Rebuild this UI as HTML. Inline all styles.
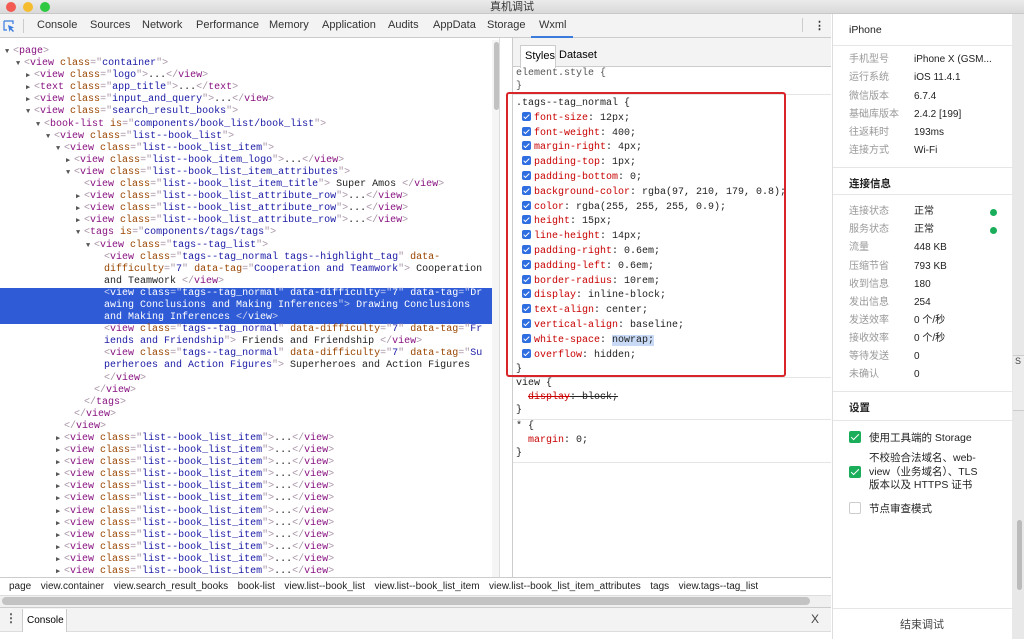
<!DOCTYPE html>
<html><head><meta charset="utf-8"><style>
*{margin:0;padding:0;box-sizing:border-box}
body{width:1024px;height:639px;overflow:hidden;background:#fff;font-family:"Liberation Sans","Noto Sans CJK SC",sans-serif;position:relative}
.abs{position:absolute}
.mono{font-family:"Liberation Mono","DejaVu Sans Mono",monospace;font-size:10px}
#title{left:0;top:0;width:1024px;height:14px;background:linear-gradient(#ebebeb,#d9d9d9);border-bottom:1px solid #c8c8c8;font-size:11px;text-align:center;line-height:14px;color:#333}
.dot{top:2px;width:10px;height:10px;border-radius:50%}
#tb{left:0;top:14px;width:831px;height:24px;background:#f3f3f3;border-bottom:1px solid #ccc}
#tb span{position:absolute;top:5px;font-size:11px;color:#333}
#dom{left:0;top:46px;width:492px}
#dom div{height:12.1px;line-height:12.1px;white-space:pre;color:#222}
.t{color:#881280}.a{color:#994500}.v{color:#1a1aa6}.p{color:#a894a6}
.tri{display:inline-block;width:8px;font-size:7px;color:#555}
.hl{background:#2f5bd6}
.hl,.hl span{color:#fff!important}
.hl .p{color:#c7d0f0!important}
#sty div{height:14.8px;line-height:14.8px;white-space:pre;color:#222}
.pr{color:#c80000}
.cb{display:inline-block;width:9px;height:9px;background:#2f6ee0;border-radius:2px;vertical-align:-1px;margin-right:3px;position:relative}
.cb:after{content:"";position:absolute;left:3px;top:1px;width:2px;height:5px;border:solid #fff;border-width:0 1.5px 1.5px 0;transform:rotate(45deg)}
#rp{left:832px;top:14px;width:180px;height:625px;background:#fff;border-left:1px solid #ddd}
.row{position:absolute;left:16px;font-size:10px;line-height:12px;color:#999}
.val{position:absolute;left:81px;font-size:10px;line-height:12px;color:#222;margin-top:0}
.sec{position:absolute;left:0;width:180px;border-top:1px solid #e6e6e6}
.gd{position:absolute;left:157px;width:7px;height:7px;border-radius:50%;background:#1aad5a}
.ck{position:absolute;left:16px;width:12px;height:12px;border-radius:2px;background:#1aad5a}
.ck:after{content:"";position:absolute;left:4px;top:1px;width:3px;height:7px;border:solid #fff;border-width:0 1.5px 1.5px 0;transform:rotate(45deg)}
#bc span{margin-right:9.5px}
</style></head><body>
<div id="title" class="abs">真机调试</div>
<div class="abs dot" style="left:6px;background:#f25a52"></div>
<div class="abs dot" style="left:23px;background:#f6bc2f"></div>
<div class="abs dot" style="left:40px;background:#2ec940"></div>
<div id="tb" class="abs">
<svg class="abs" style="left:3px;top:6px" width="13" height="13" viewBox="0 0 13 13"><path d="M1 1h9v3M1 1v9h3" fill="none" stroke="#3a7be0" stroke-width="1.2"/><path d="M5 5l6 2.5-2.5 1 2.5 2.5-1 1-2.5-2.5-1 2.5z" fill="#3a7be0"/></svg>
<div class="abs" style="left:23px;top:5px;width:1px;height:14px;background:#ccc"></div>
<span style="left:37px">Console</span><span style="left:90px">Sources</span><span style="left:142px">Network</span><span style="left:196px">Performance</span><span style="left:269px">Memory</span><span style="left:322px">Application</span><span style="left:388px">Audits</span><span style="left:433px">AppData</span><span style="left:487px">Storage</span><span style="left:539px">Wxml</span>
<div class="abs" style="left:531px;top:22px;width:42px;height:2px;background:#3b7bdc"></div>
<div class="abs" style="left:802px;top:4px;width:1px;height:14px;background:#ccc"></div>
<span style="left:814px;font-weight:bold">⋮</span>
</div>
<div id="dom" class="abs mono">
<div style="padding-left:5px"><span class="tri">▼</span><span class="p">&lt;</span><span class="t">page</span><span class="p">&gt;</span></div>
<div style="padding-left:16px"><span class="tri">▼</span><span class="p">&lt;</span><span class="t">view</span> <span class="a">class</span><span class="p">="</span><span class="v">container</span><span class="p">"&gt;</span></div>
<div style="padding-left:26px"><span class="tri">▶</span><span class="p">&lt;</span><span class="t">view</span> <span class="a">class</span><span class="p">="</span><span class="v">logo</span><span class="p">"&gt;</span>...<span class="p">&lt;/</span><span class="t">view</span><span class="p">&gt;</span></div>
<div style="padding-left:26px"><span class="tri">▶</span><span class="p">&lt;</span><span class="t">text</span> <span class="a">class</span><span class="p">="</span><span class="v">app_title</span><span class="p">"&gt;</span>...<span class="p">&lt;/</span><span class="t">text</span><span class="p">&gt;</span></div>
<div style="padding-left:26px"><span class="tri">▶</span><span class="p">&lt;</span><span class="t">view</span> <span class="a">class</span><span class="p">="</span><span class="v">input_and_query</span><span class="p">"&gt;</span>...<span class="p">&lt;/</span><span class="t">view</span><span class="p">&gt;</span></div>
<div style="padding-left:26px"><span class="tri">▼</span><span class="p">&lt;</span><span class="t">view</span> <span class="a">class</span><span class="p">="</span><span class="v">search_result_books</span><span class="p">"&gt;</span></div>
<div style="padding-left:36px"><span class="tri">▼</span><span class="p">&lt;</span><span class="t">book-list</span> <span class="a">is</span><span class="p">="</span><span class="v">components/book_list/book_list</span><span class="p">"&gt;</span></div>
<div style="padding-left:46px"><span class="tri">▼</span><span class="p">&lt;</span><span class="t">view</span> <span class="a">class</span><span class="p">="</span><span class="v">list--book_list</span><span class="p">"&gt;</span></div>
<div style="padding-left:56px"><span class="tri">▼</span><span class="p">&lt;</span><span class="t">view</span> <span class="a">class</span><span class="p">="</span><span class="v">list--book_list_item</span><span class="p">"&gt;</span></div>
<div style="padding-left:66px"><span class="tri">▶</span><span class="p">&lt;</span><span class="t">view</span> <span class="a">class</span><span class="p">="</span><span class="v">list--book_item_logo</span><span class="p">"&gt;</span>...<span class="p">&lt;/</span><span class="t">view</span><span class="p">&gt;</span></div>
<div style="padding-left:66px"><span class="tri">▼</span><span class="p">&lt;</span><span class="t">view</span> <span class="a">class</span><span class="p">="</span><span class="v">list--book_list_item_attributes</span><span class="p">"&gt;</span></div>
<div style="padding-left:84px"><span class="p">&lt;</span><span class="t">view</span> <span class="a">class</span><span class="p">="</span><span class="v">list--book_list_item_title</span><span class="p">"&gt;</span> Super Amos <span class="p">&lt;/</span><span class="t">view</span><span class="p">&gt;</span></div>
<div style="padding-left:76px"><span class="tri">▶</span><span class="p">&lt;</span><span class="t">view</span> <span class="a">class</span><span class="p">="</span><span class="v">list--book_list_attribute_row</span><span class="p">"&gt;</span>...<span class="p">&lt;/</span><span class="t">view</span><span class="p">&gt;</span></div>
<div style="padding-left:76px"><span class="tri">▶</span><span class="p">&lt;</span><span class="t">view</span> <span class="a">class</span><span class="p">="</span><span class="v">list--book_list_attribute_row</span><span class="p">"&gt;</span>...<span class="p">&lt;/</span><span class="t">view</span><span class="p">&gt;</span></div>
<div style="padding-left:76px"><span class="tri">▶</span><span class="p">&lt;</span><span class="t">view</span> <span class="a">class</span><span class="p">="</span><span class="v">list--book_list_attribute_row</span><span class="p">"&gt;</span>...<span class="p">&lt;/</span><span class="t">view</span><span class="p">&gt;</span></div>
<div style="padding-left:76px"><span class="tri">▼</span><span class="p">&lt;</span><span class="t">tags</span> <span class="a">is</span><span class="p">="</span><span class="v">components/tags/tags</span><span class="p">"&gt;</span></div>
<div style="padding-left:86px"><span class="tri">▼</span><span class="p">&lt;</span><span class="t">view</span> <span class="a">class</span><span class="p">="</span><span class="v">tags--tag_list</span><span class="p">"&gt;</span></div>
<div style="padding-left:104px"><span class="p">&lt;</span><span class="t">view</span> <span class="a">class</span><span class="p">="</span><span class="v">tags--tag_normal tags--highlight_tag</span><span class="p">"</span> <span class="a">data-</span></div>
<div style="padding-left:104px"><span class="a">difficulty</span><span class="p">="</span><span class="v">7</span><span class="p">"</span> <span class="a">data-tag</span><span class="p">="</span><span class="v">Cooperation and Teamwork</span><span class="p">"&gt;</span> Cooperation</div>
<div style="padding-left:104px">and Teamwork <span class="p">&lt;/</span><span class="t">view</span><span class="p">&gt;</span></div>
<div class="hl" style="padding-left:104px"><span class="p">&lt;</span><span class="t">view</span> <span class="a">class</span><span class="p">="</span><span class="v">tags--tag_normal</span><span class="p">"</span> <span class="a">data-difficulty</span><span class="p">="</span><span class="v">7</span><span class="p">"</span> <span class="a">data-tag</span><span class="p">="</span><span class="v">Dr</span></div>
<div class="hl" style="padding-left:104px"><span class="v">awing Conclusions and Making Inferences</span><span class="p">"&gt;</span> Drawing Conclusions</div>
<div class="hl" style="padding-left:104px">and Making Inferences <span class="p">&lt;/</span><span class="t">view</span><span class="p">&gt;</span></div>
<div style="padding-left:104px"><span class="p">&lt;</span><span class="t">view</span> <span class="a">class</span><span class="p">="</span><span class="v">tags--tag_normal</span><span class="p">"</span> <span class="a">data-difficulty</span><span class="p">="</span><span class="v">7</span><span class="p">"</span> <span class="a">data-tag</span><span class="p">="</span><span class="v">Fr</span></div>
<div style="padding-left:104px"><span class="v">iends and Friendship</span><span class="p">"&gt;</span> Friends and Friendship <span class="p">&lt;/</span><span class="t">view</span><span class="p">&gt;</span></div>
<div style="padding-left:104px"><span class="p">&lt;</span><span class="t">view</span> <span class="a">class</span><span class="p">="</span><span class="v">tags--tag_normal</span><span class="p">"</span> <span class="a">data-difficulty</span><span class="p">="</span><span class="v">7</span><span class="p">"</span> <span class="a">data-tag</span><span class="p">="</span><span class="v">Su</span></div>
<div style="padding-left:104px"><span class="v">perheroes and Action Figures</span><span class="p">"&gt;</span> Superheroes and Action Figures</div>
<div style="padding-left:104px"><span class="p">&lt;/</span><span class="t">view</span><span class="p">&gt;</span></div>
<div style="padding-left:94px"><span class="p">&lt;/</span><span class="t">view</span><span class="p">&gt;</span></div>
<div style="padding-left:84px"><span class="p">&lt;/</span><span class="t">tags</span><span class="p">&gt;</span></div>
<div style="padding-left:74px"><span class="p">&lt;/</span><span class="t">view</span><span class="p">&gt;</span></div>
<div style="padding-left:64px"><span class="p">&lt;/</span><span class="t">view</span><span class="p">&gt;</span></div>
<div style="padding-left:56px"><span class="tri">▶</span><span class="p">&lt;</span><span class="t">view</span> <span class="a">class</span><span class="p">="</span><span class="v">list--book_list_item</span><span class="p">"&gt;</span>...<span class="p">&lt;/</span><span class="t">view</span><span class="p">&gt;</span></div>
<div style="padding-left:56px"><span class="tri">▶</span><span class="p">&lt;</span><span class="t">view</span> <span class="a">class</span><span class="p">="</span><span class="v">list--book_list_item</span><span class="p">"&gt;</span>...<span class="p">&lt;/</span><span class="t">view</span><span class="p">&gt;</span></div>
<div style="padding-left:56px"><span class="tri">▶</span><span class="p">&lt;</span><span class="t">view</span> <span class="a">class</span><span class="p">="</span><span class="v">list--book_list_item</span><span class="p">"&gt;</span>...<span class="p">&lt;/</span><span class="t">view</span><span class="p">&gt;</span></div>
<div style="padding-left:56px"><span class="tri">▶</span><span class="p">&lt;</span><span class="t">view</span> <span class="a">class</span><span class="p">="</span><span class="v">list--book_list_item</span><span class="p">"&gt;</span>...<span class="p">&lt;/</span><span class="t">view</span><span class="p">&gt;</span></div>
<div style="padding-left:56px"><span class="tri">▶</span><span class="p">&lt;</span><span class="t">view</span> <span class="a">class</span><span class="p">="</span><span class="v">list--book_list_item</span><span class="p">"&gt;</span>...<span class="p">&lt;/</span><span class="t">view</span><span class="p">&gt;</span></div>
<div style="padding-left:56px"><span class="tri">▶</span><span class="p">&lt;</span><span class="t">view</span> <span class="a">class</span><span class="p">="</span><span class="v">list--book_list_item</span><span class="p">"&gt;</span>...<span class="p">&lt;/</span><span class="t">view</span><span class="p">&gt;</span></div>
<div style="padding-left:56px"><span class="tri">▶</span><span class="p">&lt;</span><span class="t">view</span> <span class="a">class</span><span class="p">="</span><span class="v">list--book_list_item</span><span class="p">"&gt;</span>...<span class="p">&lt;/</span><span class="t">view</span><span class="p">&gt;</span></div>
<div style="padding-left:56px"><span class="tri">▶</span><span class="p">&lt;</span><span class="t">view</span> <span class="a">class</span><span class="p">="</span><span class="v">list--book_list_item</span><span class="p">"&gt;</span>...<span class="p">&lt;/</span><span class="t">view</span><span class="p">&gt;</span></div>
<div style="padding-left:56px"><span class="tri">▶</span><span class="p">&lt;</span><span class="t">view</span> <span class="a">class</span><span class="p">="</span><span class="v">list--book_list_item</span><span class="p">"&gt;</span>...<span class="p">&lt;/</span><span class="t">view</span><span class="p">&gt;</span></div>
<div style="padding-left:56px"><span class="tri">▶</span><span class="p">&lt;</span><span class="t">view</span> <span class="a">class</span><span class="p">="</span><span class="v">list--book_list_item</span><span class="p">"&gt;</span>...<span class="p">&lt;/</span><span class="t">view</span><span class="p">&gt;</span></div>
<div style="padding-left:56px"><span class="tri">▶</span><span class="p">&lt;</span><span class="t">view</span> <span class="a">class</span><span class="p">="</span><span class="v">list--book_list_item</span><span class="p">"&gt;</span>...<span class="p">&lt;/</span><span class="t">view</span><span class="p">&gt;</span></div>
<div style="padding-left:56px"><span class="tri">▶</span><span class="p">&lt;</span><span class="t">view</span> <span class="a">class</span><span class="p">="</span><span class="v">list--book_list_item</span><span class="p">"&gt;</span>...<span class="p">&lt;/</span><span class="t">view</span><span class="p">&gt;</span></div>
</div>
<!-- dom scrollbar -->
<div class="abs" style="left:492px;top:40px;width:8px;height:537px;background:#f5f5f5"></div>
<div class="abs" style="left:494px;top:42px;width:5px;height:68px;border-radius:3px;background:#c1c1c1"></div>
<div class="abs" style="left:499px;top:38px;width:1px;height:539px;background:#ddd"></div>
<!-- styles -->
<div class="abs" style="left:512px;top:38px;width:1px;height:539px;background:#ccc"></div>
<div class="abs" style="left:513px;top:38px;width:318px;height:29px;background:#f3f3f3;border-bottom:1px solid #ccc"></div>
<div class="abs" style="left:520px;top:45px;width:36px;height:23px;background:#fff;border:1px solid #ccc;border-bottom:none;font-size:11px;padding:4px 0 0 4px">Styles</div>
<div class="abs" style="left:559px;top:49px;font-size:11px">Dataset</div>
<div class="abs mono" style="left:516px;top:67px;color:#555;line-height:13px">element.style {<br>}</div>
<div class="abs" style="left:513px;top:94px;width:318px;border-top:1px solid #e5e5e5"></div>
<div id="sty" class="abs mono" style="left:516px;top:97px">
<div>.tags--tag_normal {</div>
<div> <span class="cb"></span><span class="pr">font-size</span>: 12px;</div>
<div> <span class="cb"></span><span class="pr">font-weight</span>: 400;</div>
<div> <span class="cb"></span><span class="pr">margin-right</span>: 4px;</div>
<div> <span class="cb"></span><span class="pr">padding-top</span>: 1px;</div>
<div> <span class="cb"></span><span class="pr">padding-bottom</span>: 0;</div>
<div> <span class="cb"></span><span class="pr">background-color</span>: rgba(97, 210, 179, 0.8);</div>
<div> <span class="cb"></span><span class="pr">color</span>: rgba(255, 255, 255, 0.9);</div>
<div> <span class="cb"></span><span class="pr">height</span>: 15px;</div>
<div> <span class="cb"></span><span class="pr">line-height</span>: 14px;</div>
<div> <span class="cb"></span><span class="pr">padding-right</span>: 0.6em;</div>
<div> <span class="cb"></span><span class="pr">padding-left</span>: 0.6em;</div>
<div> <span class="cb"></span><span class="pr">border-radius</span>: 10rem;</div>
<div> <span class="cb"></span><span class="pr">display</span>: inline-block;</div>
<div> <span class="cb"></span><span class="pr">text-align</span>: center;</div>
<div> <span class="cb"></span><span class="pr">vertical-align</span>: baseline;</div>
<div> <span class="cb"></span><span class="pr">white-space</span>: <span style="background:#c8daf5">nowrap;</span></div>
<div> <span class="cb"></span><span class="pr">overflow</span>: hidden;</div>
<div>}</div>
</div>
<div class="abs" style="left:506px;top:92px;width:280px;height:285px;border:2px solid #d9252a;border-radius:3px"></div>
<div class="abs" style="left:513px;top:377px;width:318px;border-top:1px solid #e5e5e5"></div>
<div class="abs mono" style="left:516px;top:377px;line-height:13.5px;color:#222">view {<br>&nbsp;&nbsp;<span class="pr" style="text-decoration:line-through">display</span><span style="text-decoration:line-through">: block;</span><br>}</div>
<div class="abs" style="left:513px;top:419px;width:318px;border-top:1px solid #e5e5e5"></div>
<div class="abs mono" style="left:516px;top:420px;line-height:13.5px;color:#222">* {<br>&nbsp;&nbsp;<span class="pr">margin</span>: 0;<br>}</div>
<div class="abs" style="left:513px;top:462px;width:318px;border-top:1px solid #e5e5e5"></div>
<!-- breadcrumb -->
<div id="bc" class="abs" style="left:0;top:577px;width:831px;height:18px;border-top:1px solid #ccc;background:#fff;font-size:10px;line-height:17px;padding-left:9px;white-space:nowrap;color:#222"><span>page</span><span>view.container</span><span>view.search_result_books</span><span>book-list</span><span>view.list--book_list</span><span>view.list--book_list_item</span><span>view.list--book_list_item_attributes</span><span>tags</span><span>view.tags--tag_list</span></div>
<div class="abs" style="left:0;top:595px;width:831px;height:12px;background:#f0f0f0;border-top:1px solid #ddd"></div>
<div class="abs" style="left:2px;top:597px;width:808px;height:8px;border-radius:4px;background:#c3c3c3"></div>
<div class="abs" style="left:0;top:607px;width:831px;height:25px;background:#f3f3f3;border-top:1px solid #ccc;border-bottom:1px solid #ddd"></div>
<div class="abs" style="left:5px;top:611px;font-size:12px;font-weight:bold;color:#555">⋮</div>
<div class="abs" style="left:22px;top:609px;width:45px;height:23px;background:#fff;border-left:1px solid #ccc;border-right:1px solid #ccc;font-size:10px;padding:6px 0 0 4px">Console</div>
<div class="abs" style="left:811px;top:612px;font-size:12px;color:#444">X</div>
<!-- right panel -->
<div class="abs" style="left:1012px;top:14px;width:12px;height:625px;background:#e8e8e8"></div>
<div class="abs" style="left:1013px;top:355px;width:11px;height:56px;border-top:1px solid #ccc;border-bottom:1px solid #ccc;background:#ececec;font-size:9px;color:#444;padding-left:2px">S</div>
<div class="abs" style="left:1017px;top:520px;width:5px;height:70px;border-radius:3px;background:#bbb"></div>
<div id="rp" class="abs">
<div class="abs" style="left:16px;top:10px;font-size:10.5px;color:#222">iPhone</div>
<div class="sec" style="top:31px"></div>
<div class="row" style="top:40px">手机型号</div><div class="val" style="top:40px">iPhone X (GSM...</div>
<div class="row" style="top:58px">运行系统</div><div class="val" style="top:58px">iOS 11.4.1</div>
<div class="row" style="top:77px">微信版本</div><div class="val" style="top:77px">6.7.4</div>
<div class="row" style="top:95px">基础库版本</div><div class="val" style="top:95px">2.4.2 [199]</div>
<div class="row" style="top:113px">往返耗时</div><div class="val" style="top:113px">193ms</div>
<div class="row" style="top:131px">连接方式</div><div class="val" style="top:131px">Wi-Fi</div>
<div class="sec" style="top:153px"></div>
<div class="abs" style="left:16px;top:162px;font-size:10.5px;color:#222;font-weight:bold">连接信息</div>
<div class="sec" style="top:180px"></div>
<div class="row" style="top:192px">连接状态</div><div class="val" style="top:192px">正常</div><div class="gd" style="top:195px"></div>
<div class="row" style="top:210px">服务状态</div><div class="val" style="top:210px">正常</div><div class="gd" style="top:213px"></div>
<div class="row" style="top:228px">流量</div><div class="val" style="top:228px">448 KB</div>
<div class="row" style="top:247px">压缩节省</div><div class="val" style="top:247px">793 KB</div>
<div class="row" style="top:265px">收到信息</div><div class="val" style="top:265px">180</div>
<div class="row" style="top:283px">发出信息</div><div class="val" style="top:283px">254</div>
<div class="row" style="top:301px">发送效率</div><div class="val" style="top:301px">0 个/秒</div>
<div class="row" style="top:319px">接收效率</div><div class="val" style="top:319px">0 个/秒</div>
<div class="row" style="top:337px">等待发送</div><div class="val" style="top:337px">0</div>
<div class="row" style="top:355px">未确认</div><div class="val" style="top:355px">0</div>
<div class="sec" style="top:377px"></div>
<div class="abs" style="left:16px;top:386px;font-size:10.5px;color:#222;font-weight:bold">设置</div>
<div class="sec" style="top:406px"></div>
<div class="ck" style="top:417px"></div>
<div class="abs" style="left:36px;top:416px;font-size:10.5px;color:#222">使用工具端的 Storage</div>
<div class="ck" style="top:452px"></div>
<div class="abs" style="left:36px;top:438px;font-size:10.5px;color:#222;line-height:13.5px">不校验合法域名、web-<br>view（业务域名）、TLS<br>版本以及 HTTPS 证书</div>
<div class="abs" style="left:16px;top:488px;width:12px;height:12px;border:1px solid #ccc;border-radius:2px"></div>
<div class="abs" style="left:36px;top:487px;font-size:10.5px;color:#222">节点审查模式</div>
<div class="sec" style="top:594px"></div>
<div class="abs" style="left:67px;top:602px;font-size:11px;color:#444">结束调试</div>
</div>
</body></html>
